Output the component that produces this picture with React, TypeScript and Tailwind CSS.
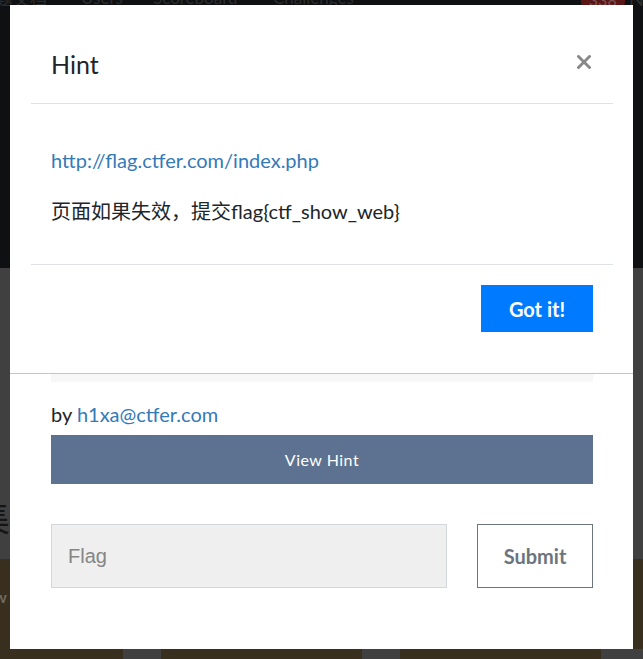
import React from 'react'

const App = () => {
  return (
    <div className="relative w-[643px] h-[659px] overflow-hidden bg-[#0f1011] font-['Lato','Noto_Sans_CJK_SC',sans-serif]">
      {/* page behind the dialogs, already dimmed by the backdrop */}
      <div className="flex flex-col h-full">
        <div className="h-[268px] bg-[#0f1011] overflow-hidden">
          <nav className="flex items-center h-[24px] -mt-[14px] text-[17px] text-[#2c2d2f] whitespace-nowrap">
            <span className="w-[85px] -ml-[4px] font-['Noto_Sans_CJK_SC',sans-serif]">题文档</span>
            <span className="w-[72px]">Users</span>
            <span className="w-[120px]">Scoreboard</span>
            <span>Challenges</span>
            <span className="ml-auto mr-[4px] mt-[4px] px-[8px] rounded-[10px] bg-[#5a1616] text-[#7c5050] text-[16px]">338</span>
            <span className="-mr-[12px] text-[20px]">No</span>
          </nav>
        </div>
        <div className="h-[291px] bg-[#404040] overflow-hidden">
          <h2 className="mt-[228px] -ml-[26px] text-[36px] leading-[40px] text-[#151515] font-['Noto_Sans_CJK_SC',sans-serif]">集</h2>
        </div>
        <div className="h-[90px] bg-[#382f1f] overflow-hidden">
          <p className="mt-[26px] -ml-[6px] text-[16px] font-bold text-[#6e6a62]">w</p>
        </div>
        <div className="flex h-[10px] bg-[#382f1f]">
          <div className="w-[123px]" />
          <div className="w-[38px] bg-[#404040]" />
          <div className="w-[201px]" />
          <div className="w-[38px] bg-[#404040]" />
          <div className="w-[201px]" />
          <div className="w-[42px] bg-[#404040]" />
        </div>
      </div>

      {/* challenge modal with the hint modal on top of it */}
      <div className="absolute left-[10px] top-[5px] w-[623px] h-[644px] bg-white flex flex-col text-[#212529]">
        <div className="h-[369px] border-b border-[#c4c4c4] flex flex-col">
          <div className="flex items-center justify-between h-[98px] pt-[20px] pl-[41px] pr-[42px]">
            <h4 className="text-[25px] leading-[32px]">Hint</h4>
            <svg width="14" height="14" viewBox="0 0 14 14" className="mt-[-4px]">
              <path d="M1.5 1.5 L12.5 12.5 M12.5 1.5 L1.5 12.5" stroke="#878787" strokeWidth="2.8" strokeLinecap="square" />
            </svg>
          </div>
          <div className="h-px ml-[21px] mr-[20px] bg-[#dee2e6]" />
          <div className="pt-[41px] pb-[38px] pl-[41px] pr-[40px] text-[20px] leading-[30px]">
            <a className="block text-[#337ab7]">http://flag.ctfer.com/index.php</a>
            <p className="mt-[21px]">页面如果失效，提交flag{'{'}ctf_show_web{'}'}</p>
          </div>
          <div className="h-px ml-[21px] mr-[20px] bg-[#dee2e6]" />
          <div className="flex justify-end pt-[20px] pr-[40px]">
            <button className="w-[112px] h-[47px] bg-[#007bff] text-white text-[20px] font-bold">Got it!</button>
          </div>
        </div>

        <div className="flex flex-col pl-[41px] pr-[40px]">
          <div className="h-[8px] bg-[#f7f7f7]" />
          <p className="mt-[20px] text-[20px] leading-[24px]">
            by <a className="text-[#337ab7]">h1xa@ctfer.com</a>
          </p>
          <button className="mt-[9px] h-[49px] bg-[#5c7290] text-white text-[16px] tracking-[0.5px]">View Hint</button>
          <div className="mt-[40px] flex gap-[30px]">
            <input
              placeholder="Flag"
              className="w-[396px] h-[64px] px-[16px] bg-[#efefef] border border-[#d3d7dc] text-[20px] font-['Liberation_Sans',sans-serif] placeholder:text-[#858585] outline-none"
            />
            <button className="w-[116px] h-[64px] border border-[#6c757d] text-[#6c757d] text-[20px] font-bold">Submit</button>
          </div>
        </div>
      </div>
    </div>
  )
}

export default App
